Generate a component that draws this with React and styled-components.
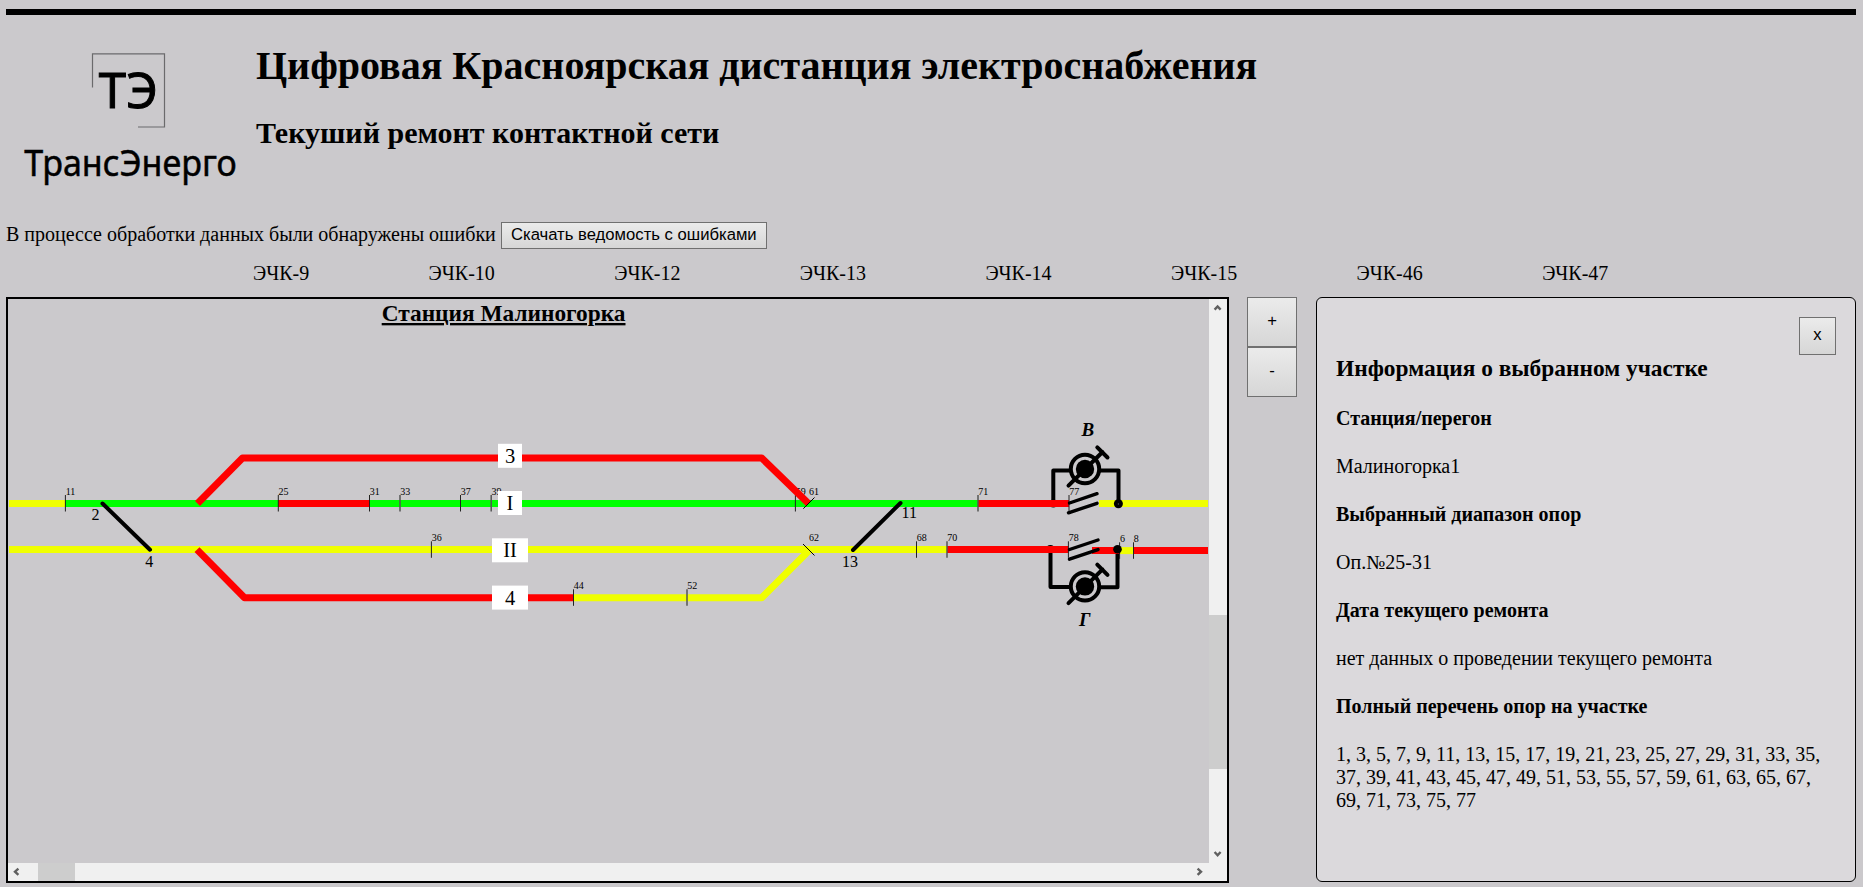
import React from "react";
import styled, { createGlobalStyle } from "styled-components";

const serif = `"Liberation Serif", "Times New Roman", serif`;
const sans = `"Liberation Sans", Arial, sans-serif`;

const GlobalStyle = createGlobalStyle`
  * { box-sizing: border-box; }
  html, body { margin: 0; background: #cbc9cc; overflow: hidden; }
  body { font: 20px/23px ${serif}; color: #000; }
`;

const Page = styled.div`
  height: 887px;
  padding: 9px 7px 0 6px;
  display: flex;
  flex-direction: column;
`;
const TopRule = styled.div`
  height: 6px;
  flex: none;
  background: #000;
`;
const Header = styled.header`
  display: flex;
  height: 205px;
`;
const Logo = styled.svg`
  width: 250px;
  height: 190px;
  flex: none;
`;
const Titles = styled.div`
  display: flex;
  flex-direction: column;
`;
const Title = styled.h1`
  margin: 28px 0 0;
  font-size: 40px;
  line-height: 46px;
  white-space: nowrap;
`;
const Subtitle = styled.h2`
  margin: 27px 0 0;
  font-size: 30px;
  line-height: 34px;
`;
const ErrorBar = styled.div`
  display: flex;
  align-items: center;
  gap: 5px;
  height: 31px;
`;
const ErrorText = styled.span`
  padding-bottom: 2px;
`;
const Button = styled.button`
  display: flex;
  align-items: center;
  justify-content: center;
  width: ${(p) => p.$w}px;
  height: ${(p) => p.$h}px;
  padding: 0 0 2px;
  border: 1px solid #707070;
  border-radius: 0;
  background: linear-gradient(#ebebeb, #d6d6d6);
  color: #000;
  font: 16.67px ${sans};
  white-space: nowrap;
`;
const Nav = styled.nav`
  display: flex;
  gap: 119.4px;
  padding: 11px 0 0 247px;
  height: 46px;
  white-space: nowrap;
`;
const Main = styled.main`
  display: flex;
  align-items: flex-start;
`;
const Scheme = styled.section`
  display: grid;
  grid-template: 564px 18px / 1201px 18px;
  width: 1223px;
  height: 586px;
  border: 2px solid #000;
`;
const Drawing = styled.svg`
  display: block;
  width: 1201px;
  height: 564px;
  font-family: ${serif};
`;
const Scroll = styled.div`
  display: flex;
  flex-direction: ${(p) => (p.$vertical ? "column" : "row")};
  justify-content: space-between;
  align-items: center;
  background: #f0f0f0;
`;
const Gap = styled.div`
  flex: 0 0 ${(p) => p.$size}px;
`;
const Thumb = styled.div`
  flex: 0 0 ${(p) => p.$size}px;
  align-self: stretch;
  background: #cdcdcd;
`;
const Filler = styled.div`
  flex: 1;
`;
const Arrow = styled.svg`
  width: 18px;
  height: 18px;
  flex: none;
`;
const Zoom = styled.div`
  display: flex;
  flex-direction: column;
  margin-left: 18px;
`;
const Info = styled.aside`
  width: 540px;
  height: 585px;
  margin-left: 19px;
  padding: 19px;
  border: 1px solid #000;
  border-radius: 6px;
  background: #dbd9dc;
`;
const CloseRow = styled.div`
  display: flex;
  justify-content: flex-end;
`;
const InfoTitle = styled.h3`
  margin: 0 0 25px;
  font-size: 23.4px;
  line-height: 27px;
`;
const Line = styled.p`
  margin: 0 0 25px;
  font-weight: ${(p) => (p.$bold ? "bold" : "normal")};
`;

const GREEN = "#00ff00";
const RED = "#ff0000";
const YELLOW = "#f0ff00";

const Track = ({ c, d }) => (
  <path d={d} fill="none" stroke={c} strokeWidth="7" strokeLinejoin="round" />
);
const Wire = ({ d, w = 4 }) => (
  <path d={d} fill="none" stroke="#000" strokeWidth={w} strokeLinecap="round" strokeLinejoin="round" />
);
const Pole = ({ x, y, n, wide }) => (
  <g>
    <path
      d={`M${x} ${y}v16.5`}
      stroke={wide ? "#555" : "#222"}
      strokeWidth={wide ? 1.5 : 1}
    />
    <text x={x + 0.3} y={y} fontSize="10">{n}</text>
  </g>
);
const TrackName = ({ x, y, w, n, base }) => (
  <g>
    <rect x={x} y={y} width={w} height="24" fill="#fff" />
    <text x={x + w / 2} y={base} fontSize="20.5" textAnchor="middle">{n}</text>
  </g>
);
const Device = ({ y }) => (
  <g>
    <circle cx="1085" cy={y} r="14.2" fill="#cbc9cc" stroke="#000" strokeWidth="4" />
    <circle cx="1085" cy={y} r="9.2" />
    <Wire d={`M1068.5 ${y + 16.7}L1102.5 ${y - 17}M1097.3 ${y - 21.7}L1107.5 ${y - 11.5}`} />
  </g>
);

const chevrons = {
  up: "M5.6 10.6L8.6 7.4L11.6 10.6",
  down: "M5.6 7L8.6 10.2L11.6 7",
  left: "M10.4 5.6L7 8.7L10.4 11.8",
  right: "M6.6 5.6L10 8.7L6.6 11.8",
};
const Chevron = ({ dir }) => (
  <Arrow viewBox="0 0 18 18">
    <path d={chevrons[dir]} fill="none" stroke="#606060" strokeWidth="2.4" />
  </Arrow>
);

const topPoles = [
  [65.4, 11], [278.3, 25], [369.5, 31], [400, 33, 1], [460.5, 37],
  [491.2, 39, 1], [795.4, 59], [978, 71, 1], [1069, 77],
];
const midPoles = [[431.4, 36], [916.5, 68], [947, 70, 1], [1068.4, 78]];
const departments = [9, 10, 12, 13, 14, 15, 46, 47];
const poles = Array.from({ length: 39 }, (_, i) => i * 2 + 1).join(", ");

export default function App() {
  return (
    <Page>
      <GlobalStyle />
      <TopRule />
      <Header>
        <Logo viewBox="6 15 250 190">
          <path d="M92.5 87.5V53.8H164.5V127H138" fill="none" stroke="#6b6a6c" strokeWidth="1.2" />
          <g fontFamily='"Noto Sans", "Open Sans", sans-serif' stroke="#000">
            <text x="98.8" y="107.5" fontSize="49" strokeWidth="1" textLength="59" lengthAdjust="spacingAndGlyphs">ТЭ</text>
            <text x="24.3" y="176" fontSize="36.5" strokeWidth="0.5" textLength="212.5" lengthAdjust="spacingAndGlyphs">ТрансЭнерго</text>
          </g>
        </Logo>
        <Titles>
          <Title>Цифровая Красноярская дистанция электроснабжения</Title>
          <Subtitle>Текуший ремонт контактной сети</Subtitle>
        </Titles>
      </Header>
      <ErrorBar>
        <ErrorText>В процессе обработки данных были обнаружены ошибки</ErrorText>
        <Button $w={266} $h={27}>Скачать ведомость с ошибками</Button>
      </ErrorBar>
      <Nav>
        {departments.map((n) => <span key={n}>ЭЧК-{n}</span>)}
      </Nav>
      <Main>
        <Scheme>
          <Drawing viewBox="8 299 1201 564">
            <text x="381.7" y="321" fontSize="23.35" fontWeight="bold" textDecoration="underline">Станция Малиногорка</text>

            <Wire d="M1070 470.5H1053.3V503M1100 470.5H1118.5V503" />
            <circle cx="1053.3" cy="503.5" r="4" />
            <Wire d="M1070 587H1050.5V548M1100 587.3H1117.5V549" />
            <circle cx="1050.4" cy="549" r="4" />

            <Track c={YELLOW} d="M9 503.4H65" />
            <Track c={GREEN} d="M65 503.4H278M369.5 503.4H978" />
            <Track c={RED} d="M278 503.4H369.5M978 503.4H1069" />
            <Track c={YELLOW} d="M1099 503.4H1208" />
            <Track c={YELLOW} d="M9 549.6H947" />
            <Track c={RED} d="M947 549.6H1068.5M1092 550.6H1120" />
            <Track c={YELLOW} d="M1120 550.6H1133.5" />
            <Track c={RED} d="M1133.5 550.6H1208" />

            {topPoles.map(([x, n, wide]) => <Pole key={n} x={x} y={495} n={n} wide={wide} />)}
            {midPoles.map(([x, n, wide]) => <Pole key={n} x={x} y={541.3} n={n} wide={wide} />)}
            <Pole x={1119.6} y={542.3} n={6} />
            <Pole x={1133.5} y={542.3} n={8} />

            <Track c={RED} d="M197.5 503.5L242.5 458H761.7L808.5 503.5" />
            <Track c={RED} d="M197 549.6L244.5 597.7H573.5" />
            <Track c={YELLOW} d="M573.5 597.7H761.7L809 550.5" />
            <Pole x={573.5} y={589.3} n={44} />
            <Pole x={687} y={589.3} n={52} wide />
            <path d="M803.3 508.7L814.5 497.5M803 544L814.5 555.5" stroke="#000" strokeWidth="1" />
            <g fontSize="10">
              <text x="809" y="495">61</text>
              <text x="809" y="541.3">62</text>
            </g>

            <Wire d="M102.5 503.5L150 549.7M900.5 503L853 550" w={4} />
            <g fontSize="16">
              <text x="91.4" y="520">2</text>
              <text x="145.3" y="567">4</text>
              <text x="901.5" y="518">11</text>
              <text x="842" y="567">13</text>
            </g>

            <TrackName x={498} y={443.8} w={24} n="3" base={462.5} />
            <TrackName x={498} y={491} w={24} n="I" base={509.5} />
            <TrackName x={492} y={538.3} w={36} n="II" base={557} />
            <TrackName x={492} y={585.6} w={36} n="4" base={604.7} />

            <circle cx="1118.4" cy="503.7" r="4.5" />
            <circle cx="1118.4" cy="504" r="0.7" fill="#555" />
            <circle cx="1117.5" cy="549.2" r="4.3" />
            <Wire w={3.4} d="M1069.5 503L1097 493.7M1068.5 512.8L1097 503.3M1069.5 549.5L1098 540M1069.5 559.2L1098 549.6" />
            <Device y={469} />
            <Device y={586.4} />
            <g fontSize="19" fontWeight="bold" fontStyle="italic">
              <text x="1081.5" y="435.8">В</text>
              <text x="1079" y="625.7">Г</text>
            </g>
          </Drawing>
          <Scroll $vertical>
            <Chevron dir="up" />
            <Gap $size={298} />
            <Thumb $size={154} />
            <Filler />
            <Chevron dir="down" />
          </Scroll>
          <Scroll>
            <Chevron dir="left" />
            <Gap $size={12} />
            <Thumb $size={37} />
            <Filler />
            <Chevron dir="right" />
          </Scroll>
          <Scroll />
        </Scheme>
        <Zoom>
          <Button $w={50} $h={50}>+</Button>
          <Button $w={50} $h={50}>-</Button>
        </Zoom>
        <Info>
          <CloseRow><Button $w={37} $h={38}>x</Button></CloseRow>
          <InfoTitle>Информация о выбранном участке</InfoTitle>
          <Line $bold>Станция/перегон</Line>
          <Line>Малиногорка1</Line>
          <Line $bold>Выбранный диапазон опор</Line>
          <Line>Оп.№25-31</Line>
          <Line $bold>Дата текущего ремонта</Line>
          <Line>нет данных о проведении текущего ремонта</Line>
          <Line $bold>Полный перечень опор на участке</Line>
          <Line>{poles}</Line>
        </Info>
      </Main>
    </Page>
  );
}
